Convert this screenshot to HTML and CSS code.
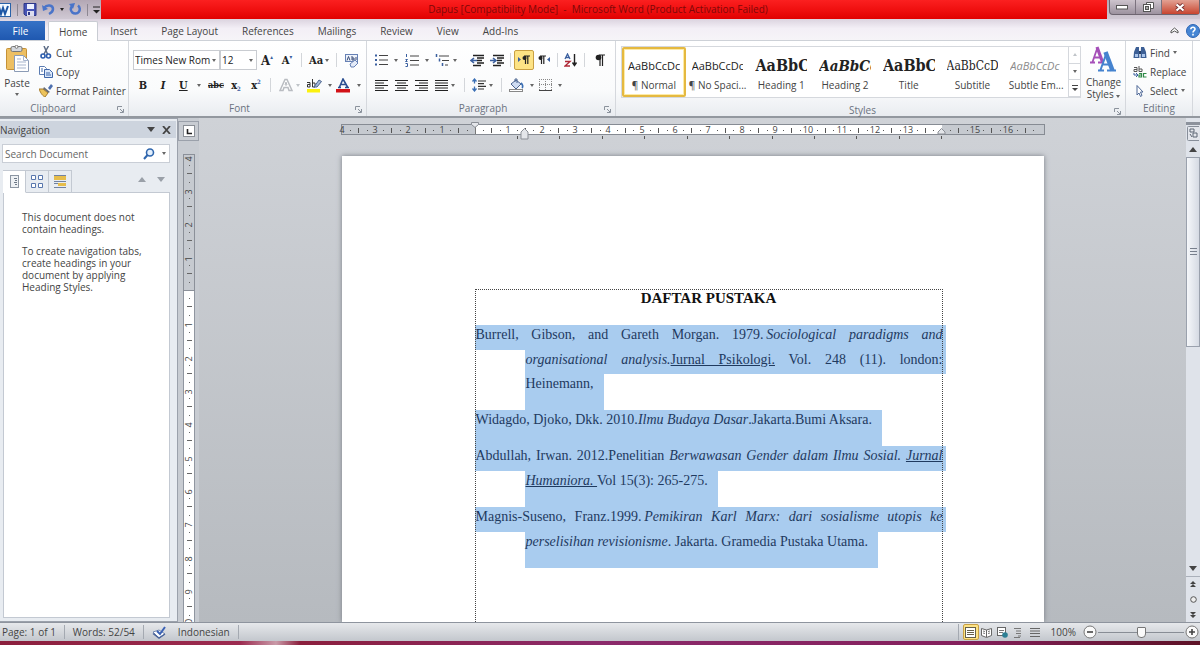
FILE: index.html
```html
<!DOCTYPE html>
<html lang="en">
  <head>
    <meta charset="UTF-8" />
    <meta name="viewport" content="width=device-width, initial-scale=1.0" />
    <title>Dapus [Compatibility Mode] - Microsoft Word</title>
    <link rel="stylesheet" href="styles.css">
  </head>

  <body>
    <!-- Title bar -->
    <header class="titlebar">
      <div class="quick">
        <svg width="12" height="14" viewBox="0 0 12 14"><rect x="-4" y=".5" width="14.500" height="13" fill="#f4f9ff" stroke="#2a62a8"/><path d="M-1 4l2 7 2-6 2 6 3-8" fill="none" stroke="#1c55a5" stroke-width="2"/></svg>
        <i class="bar"></i>
        <button aria-label="Save"><svg width="14" height="13" viewBox="0 0 14 13"><path d="M1 .5h12v12H2.500L1 11z" fill="#4754b4" stroke="#2e3788"/><rect x="4" y="1" width="7" height="5" fill="#eef1ff"/><rect x="4" y="8" width="7" height="5" fill="#dde"/><rect x="5" y="9" width="2" height="3" fill="#2e3788"/></svg></button>
        <button aria-label="Undo"><svg width="13" height="13" viewBox="0 0 13 13"><path d="M2 5C5 1 11 2 11 6c0 3-2 4-4 5" fill="none" stroke="#4a74c9" stroke-width="2.500"/><path d="M0 2l1 6 5-2z" fill="#4a74c9"/></svg></button>
        <i class="caret dark"></i>
        <button aria-label="Repeat"><svg width="13" height="13" viewBox="0 0 13 13"><path d="M9 2.500A4.500 4.500 0 1 1 3 3" fill="none" stroke="#4a74c9" stroke-width="2.500"/><path d="M6 0L0 1l4 5z" fill="#4a74c9"/></svg></button>
        <i class="bar"></i>
        <button aria-label="Customize"><svg width="7" height="8" viewBox="0 0 7 8"><path d="M0 1h7" stroke="#222"/><path d="M0 4h7L3.500 7.500z" fill="#222"/></svg></button>
      </div>
      <h1 class="title">Dapus [Compatibility Mode]&nbsp; -&nbsp; Microsoft Word (Product Activation Failed)</h1>
      <div class="window-controls">
        <button aria-label="Minimize"><svg width="12" height="5" viewBox="0 0 12 5"><rect x=".5" y=".5" width="11" height="3.500" fill="#fff" stroke="#555"/></svg></button>
        <button aria-label="Restore"><svg width="11" height="10" viewBox="0 0 11 10"><path d="M3.500.500h7v6h-7z" fill="#fff" stroke="#555"/><rect x=".5" y="2.500" width="7" height="7" fill="#fff" stroke="#555"/><rect x="2.500" y="4.500" width="3" height="3" fill="#aaa" stroke="#555"/></svg></button>
        <button class="close" aria-label="Close"><svg width="10" height="9" viewBox="0 0 10 9"><path d="M1.500 1.500l7 6m0-6l-7 6" stroke="#733" stroke-width="4"/><path d="M1.500 1.500l7 6m0-6l-7 6" stroke="#fff" stroke-width="2.200"/></svg></button>
      </div>
    </header>

    <!-- Ribbon tabs -->
    <nav class="tabs">
      <button class="file">File</button>
      <button class="active">Home</button>
      <button>Insert</button>
      <button>Page Layout</button>
      <button>References</button>
      <button>Mailings</button>
      <button>Review</button>
      <button>View</button>
      <button>Add-Ins</button>
      <span class="tabs-end">
        <button aria-label="Minimize the Ribbon"><svg width="9" height="7" viewBox="0 0 9 7"><path d="M1 4l3.500-3L8 4v2L4.500 4 1 6z" fill="#fff" stroke="#555"/></svg></button>
        <button aria-label="Help"><svg width="14" height="14" viewBox="0 0 14 14"><circle cx="7" cy="7" r="6.500" fill="#4685d4" stroke="#2e65b3"/><path d="M4.800 5.200C5 2.600 9.300 2.800 9 5.200 8.900 6.600 7 6.600 7 8.500M7 9.700v1.700" fill="none" stroke="#fff" stroke-width="1.600"/></svg></button>
      </span>
    </nav>

    <!-- Ribbon -->
    <div class="ribbon">
      <section class="group clipboard">
        <div class="group-body">
          <button class="big paste">
            <svg width="25" height="28" viewBox="0 0 25 28"><rect x="1.500" y="3.500" width="20" height="21" rx="1" fill="#edbf62" stroke="#c59136"/><rect x="6" y="1.500" width="11" height="5" rx="1.500" fill="#d3d7dd" stroke="#777"/><circle cx="11.500" cy="1.800" r="1.500" fill="#fff" stroke="#777"/><path d="M9.500 10.500h9l5 5v11h-14z" fill="#fff" stroke="#8b9bb5"/><path d="M18.500 10.500v5h5M12 14h4M12 17h9M12 20h9M12 23h9" fill="none" stroke="#a7b5cd"/></svg>
            <span>Paste</span><i class="caret"></i>
          </button>
          <div class="stack">
            <button><svg width="14" height="13" viewBox="0 0 14 13"><path d="M5 0l3.500 8M9.500 0L5 8" stroke="#5b6b85" stroke-width="1.500"/><circle cx="4" cy="10" r="2" fill="none" stroke="#2d5eae" stroke-width="1.600"/><circle cx="9.500" cy="10" r="2" fill="none" stroke="#2d5eae" stroke-width="1.600"/></svg>Cut</button>
            <button><svg width="14" height="12" viewBox="0 0 14 12"><path d="M.5.500h5l2 2v6h-7z" fill="#fff" stroke="#5b7cb2"/><path d="M5.500 3.500h5l3 3v5h-8z" fill="#dbe8fa" stroke="#3f66a8"/><path d="M2 3h2M2 5h2M7 7h4M7 9h5" stroke="#3f66a8"/></svg>Copy</button>
            <button><svg width="14" height="13" viewBox="0 0 14 13"><path d="M9 4l3-4 2 2-3 4z" fill="#4d6fae"/><path d="M5 3l6 5-2 1-5-4z" fill="#666c78"/><path d="M0 5l4 0 5 4-3 4c-2-1-4-3-6-8z" fill="#ecc35b" stroke="#a57b2b"/></svg>Format Painter</button>
          </div>
        </div>
        <footer>Clipboard<svg class="launcher" viewBox="0 0 7 7"><path d="M.5 4V.5H5M3 3l3 3M6.500 3v3.500H3" /></svg></footer>
      </section>

      <section class="group font">
        <div class="group-body rows">
          <div class="row">
            <label class="combo family"><select aria-label="Font"><option>Times New Rom</option></select><i class="caret"></i></label>
            <label class="combo size"><select aria-label="Font size"><option>12</option></select><i class="caret"></i></label>
            <button class="tool serif grow">A<sup>▴</sup></button>
            <button class="tool serif shrink">A<sup>▾</sup></button>
            <i class="sep"></i>
            <button class="tool case serif">Aa<i class="caret"></i></button>
            <i class="sep"></i>
            <button class="tool" aria-label="Clear formatting"><svg width="15" height="15" viewBox="0 0 15 15"><rect x="1.500" y="1.500" width="12" height="7" fill="#eef3fb" stroke="#6681b5"/><path d="M3 7.500l1.500-4L6 7.500M8 3v4h2V5H8M12 4v3" fill="none" stroke="#3a4d77"/><path d="M6 11l5-4 3 3-4 4H7z" fill="#e4ebf8" stroke="#6681b5"/></svg></button>
          </div>
          <div class="row">
            <button class="tool serif"><b>B</b></button>
            <button class="tool serif"><em>I</em></button>
            <button class="tool drop wide-drop serif"><u>U</u><i class="caret"></i></button>
            <button class="tool serif tiny"><s>abc</s></button>
            <button class="tool serif small">x<sub>2</sub></button>
            <button class="tool serif small">x<sup>2</sup></button>
            <i class="sep"></i>
            <button class="tool drop effects" aria-label="Text effects"><svg width="15" height="14" viewBox="0 0 15 14"><path d="M1 12.500L6 1.500h2l5 11h-3l-1-3H5l-1 3z" fill="#fff" stroke="#b9bcc1" stroke-width="1.500"/><path d="M6 7h2L7 4z" fill="#fff" stroke="#b9bcc1"/></svg><i class="caret pale"></i></button>
            <button class="tool drop" aria-label="Highlight"><svg width="16" height="15" viewBox="0 0 16 15"><rect x="1" y="11" width="13" height="3.500" fill="#fbf10f"/><path d="M1 4.500h3v4.500H1.500V6.500H4M6.500 1v8h2.500V5H6.500" fill="none" stroke="#333"/><path d="M8 9l5-7 2.500 1.500L11 9z" fill="#a6b9d8" stroke="#4b648f"/></svg><i class="caret"></i></button>
            <button class="tool drop" aria-label="Font color"><svg width="15" height="15" viewBox="0 0 15 15"><rect x="0" y="11" width="14" height="3.500" fill="#d21217"/><path d="M2 9.500h3M9 9.500h4M3.500 9L7 1l4.500 8M5 6.500h4.500" fill="none" stroke="#2c4f91" stroke-width="1.600"/></svg><i class="caret"></i></button>
          </div>
        </div>
        <footer>Font<svg class="launcher" viewBox="0 0 7 7"><path d="M.5 4V.5H5M3 3l3 3M6.500 3v3.500H3" /></svg></footer>
      </section>

      <section class="group paragraph">
        <div class="group-body rows">
          <div class="row">
            <button class="tool drop" aria-label="Bullets"><svg width="13" height="12" viewBox="0 0 13 12"><path d="M0 1.500h2M0 6h2M0 10.500h2" stroke="#3a5f9f" stroke-width="2"/><path d="M4 1.500h9M4 6h9M4 10.500h9" stroke="#444"/></svg><i class="caret"></i></button>
            <button class="tool drop" aria-label="Numbering"><svg width="14" height="13" viewBox="0 0 14 13"><path d="M1.500 0v3M.5 5.500h2L.5 7.500h2M.5 9.500h2v3h-2" fill="none" stroke="#3a5f9f"/><path d="M5 2h9M5 6.500h9M5 11h9" stroke="#444"/></svg><i class="caret"></i></button>
            <button class="tool drop tight multilevel" aria-label="Multilevel list"><svg width="15" height="13" viewBox="0 0 15 13"><path d="M1.500 0v3M4.500 4.500v3M7.500 9v3" stroke="#3a5f9f" stroke-width="1.500"/><path d="M4 2h10M7 6.500h7M10 11h3" stroke="#444"/></svg><i class="caret"></i></button>
            <button class="tool" aria-label="Decrease indent"><svg width="14" height="13" viewBox="0 0 14 13"><path d="M3 1.500h11M7 4h7M7 6.500h5M7 9h7M3 11.500h8" stroke="#222" stroke-width="1.400"/><path d="M7 6.500H2M4 4L1 6.500 4 9" fill="none" stroke="#3a5f9f" stroke-width="1.600"/></svg></button>
            <button class="tool" aria-label="Increase indent"><svg width="14" height="13" viewBox="0 0 14 13"><path d="M3 1.500h11M7 4h7M7 6.500h5M7 9h7M3 11.500h8" stroke="#222" stroke-width="1.400"/><path d="M0 6.500h5M3 4l3 2.500L3 9" fill="none" stroke="#3a5f9f" stroke-width="1.600"/></svg></button>
            <i class="sep"></i>
            <button class="tool chosen" aria-label="Left to right"><svg width="12" height="10" viewBox="0 0 12 10"><path d="M0 2v5l3-2.500z" fill="#3a5f9f"/><path d="M7.500 1.500V9M9.800 1.500V9M6 1h6" stroke="#222" stroke-width="1.200"/><circle cx="6.500" cy="3" r="2" fill="#222"/></svg></button>
            <button class="tool" aria-label="Right to left"><svg width="12" height="10" viewBox="0 0 12 10"><path d="M12 2v5L9 4.500z" fill="#3a5f9f"/><path d="M3.500 1.500V9M5.800 1.500V9M2 1h6" stroke="#222" stroke-width="1.200"/><circle cx="2.500" cy="3" r="2" fill="#222"/></svg></button>
            <i class="sep"></i>
            <button class="tool" aria-label="Sort"><svg width="14" height="14" viewBox="0 0 14 14"><path d="M1 6l2.500-5L6 6M2 4.500h3" fill="none" stroke="#3a5f9f" stroke-width="1.300"/><path d="M1 8.500h5L1 13h5" fill="none" stroke="#b02a38" stroke-width="1.400"/><path d="M10.500 1v11M8.500 9.500l2 3 2-3" fill="none" stroke="#222" stroke-width="1.400"/></svg></button>
            <i class="sep"></i>
            <button class="tool marks-button" aria-label="Show marks"><svg width="10" height="12" viewBox="0 0 10 12"><path d="M5 1v11M7.500 1v11M4 1h6" stroke="#222" stroke-width="1.200"/><circle cx="3.500" cy="3.500" r="2.800" fill="#222"/></svg></button>
          </div>
          <div class="row">
            <button class="tool" aria-label="Align left"><svg class="lines" viewBox="0 0 13 11"><path d="M0 .5h13M0 3h9M0 5.500h13M0 8h9M0 10.500h13"/></svg></button>
            <button class="tool" aria-label="Center"><svg class="lines" viewBox="0 0 13 11"><path d="M0 .5h13M2 3h9M0 5.500h13M2 8h9M0 10.500h13"/></svg></button>
            <button class="tool" aria-label="Align right"><svg class="lines" viewBox="0 0 13 11"><path d="M0 .5h13M4 3h9M0 5.500h13M4 8h9M0 10.500h13"/></svg></button>
            <button class="tool drop tight" aria-label="Justify"><svg class="lines" viewBox="0 0 13 11"><path d="M0 .5h13M0 3h13M0 5.500h13M0 8h13M0 10.500h13"/></svg><i class="caret"></i></button>
            <i class="sep"></i>
            <button class="tool drop tight" aria-label="Line spacing"><svg width="14" height="14" viewBox="0 0 14 14"><path d="M2.500 1v4.500M2.500 8.500V13M.5 3.500l2-2.500 2 2.500M.5 10.500l2 2.500 2-2.500" fill="none" stroke="#3a6fb5" stroke-width="1.300"/><path d="M6 3h8M6 5.700h6M6 8.400h8M6 11h6" stroke="#333" stroke-width="1.200"/></svg><i class="caret"></i></button>
            <i class="sep"></i>
            <button class="tool drop" aria-label="Shading"><svg width="15" height="14" viewBox="0 0 15 14"><path d="M2 6l5-4 5 4-5 5z" fill="#cfdcf2" stroke="#4b648f"/><path d="M6 4V1h2v4" fill="none" stroke="#4b648f"/><path d="M12 5c2 2 2 4 1 5" fill="none" stroke="#3a6fb5" stroke-width="1.800"/><rect x=".5" y="11.500" width="13" height="2" fill="#fff" stroke="#888"/></svg><i class="caret"></i></button>
            <button class="tool drop" aria-label="Borders"><svg width="13" height="12" viewBox="0 0 13 12"><path d="M.5 0v11M12.500 0v11M6.500 0v11M0 .5h13M0 5.500h13" stroke="#888" stroke-dasharray="1 1"/><path d="M0 11.500h13" stroke="#444"/></svg><i class="caret"></i></button>
          </div>
        </div>
        <footer>Paragraph<svg class="launcher" viewBox="0 0 7 7"><path d="M.5 4V.5H5M3 3l3 3M6.500 3v3.500H3" /></svg></footer>
      </section>

      <section class="group styles">
        <div class="group-body">
          <div class="gallery">
            <button class="style picked"><span class="preview">AaBbCcDc</span><span>¶ Normal</span></button>
            <button class="style"><span class="preview">AaBbCcDc</span><span>¶ No Spaci...</span></button>
            <button class="style"><span class="preview heading">AaBbC</span><span>Heading 1</span></button>
            <button class="style"><span class="preview heading slanted">AaBbCc</span><span>Heading 2</span></button>
            <button class="style"><span class="preview heading">AaBbC</span><span>Title</span></button>
            <button class="style"><span class="preview subtitle">AaBbCcD</span><span>Subtitle</span></button>
            <button class="style"><span class="preview subtle">AaBbCcDc</span><span>Subtle Em...</span></button>
            <div class="gallery-scroll">
              <button aria-label="Previous row"><i class="caret up pale"></i></button>
              <button aria-label="Next row"><i class="caret"></i></button>
              <button aria-label="More styles"><svg width="6" height="6" viewBox="0 0 6 6"><path d="M0 .5h6" stroke="#444"/><path d="M0 3h6L3 6z" fill="#444"/></svg></button>
            </div>
          </div>
          <button class="big change">
            <svg width="27" height="26" viewBox="0 0 27 26"><path d="M0 16.500h5M8 16.500h6M2.500 16L7.500 1.500M4.500 11.500H11" fill="none" stroke="#a54fb8" stroke-width="1.800"/><path d="M7 1l5.500 15" stroke="#a54fb8" stroke-width="3.200"/><path d="M8 24.500h6M17 24.500h9M10.500 24L16.500 7M12.500 18.500h9" fill="none" stroke="#4583cf" stroke-width="2"/><path d="M15.500 6L22.500 24.500" stroke="#4583cf" stroke-width="4.500"/></svg>
            <span>Change<br>Styles <i class="caret"></i></span>
          </button>
        </div>
        <footer>Styles<svg class="launcher" viewBox="0 0 7 7"><path d="M.5 4V.5H5M3 3l3 3M6.500 3v3.500H3" /></svg></footer>
      </section>

      <section class="group editing">
        <div class="group-body">
          <div class="stack">
            <button><svg width="14" height="12" viewBox="0 0 14 12"><path d="M3 0h3v3l.5 8H.5L1 5zM8 0h3l2 5 .5 6h-6z" fill="#3c5f95"/><path d="M6 4h2v3H6z" fill="#263f68"/><path d="M2 7h3v3H2zM9 7h3v3H9z" fill="#a9c4ea"/></svg>Find <i class="caret"></i></button>
            <button><svg width="14" height="12" viewBox="0 0 14 12"><path d="M1 1.500h3v4H1v-2h3M6 0v5.500h3V3H6" fill="none" stroke="#555"/><path d="M6 7.500h2.500v3.500H6V9h2M13.500 7.500h-3v3.500h3" fill="none" stroke="#2f8a48" stroke-width="1.200"/><path d="M1 7v2h3M3 7l2 2-2 2" fill="none" stroke="#3a5f9f"/></svg>Replace</button>
            <button><svg width="14" height="12" viewBox="0 0 14 12"><path d="M4 .5v9.500l2-2 1.500 3.500 1.500-1L7.500 7H10z" fill="#fff" stroke="#4d6796"/></svg>Select <i class="caret"></i></button>
          </div>
        </div>
        <footer>Editing</footer>
      </section>
    </div>

    <!-- Workspace -->
    <main class="workspace">
      <aside class="nav-pane">
        <div class="pane-title"><h2>Navigation</h2><i class="caret wide"></i>
          <button aria-label="Close pane"><svg width="9" height="8" viewBox="0 0 9 8"><path d="M1 0l7 8M8 0L1 8" stroke="#444" stroke-width="1.800"/></svg></button>
        </div>
        <div class="search">
          <input type="text" aria-label="Search Document" placeholder="Search Document">
          <svg width="12" height="12" viewBox="0 0 12 12"><circle cx="7" cy="4.500" r="3.500" fill="#e4f0fd" stroke="#2f66ad" stroke-width="1.600"/><path d="M4.500 7L1 11" stroke="#2f66ad" stroke-width="2"/></svg>
          <i class="caret"></i>
        </div>
        <div class="pane-tabs">
          <button class="active" aria-label="Headings"><svg width="9" height="13" viewBox="0 0 9 13"><rect x=".5" y=".5" width="8" height="12" fill="#eef1f4" stroke="#8c96a3"/><path d="M4 3.500h3M5 5.500h2M4 7.500h3M5 9.500h2" stroke="#6d7886"/></svg></button>
          <button aria-label="Pages"><svg width="12" height="13" viewBox="0 0 12 13"><path d="M.5.500h4v4h-4zM7.500.500h4v4h-4zM.5 8.500h4v4h-4zM7.500 8.500h4v4h-4z" fill="#fff" stroke="#5876ad"/></svg></button>
          <button aria-label="Results"><svg width="12" height="13" viewBox="0 0 12 13"><rect width="12" height="5" fill="#e6bd4b"/><path d="M0 .5h12M0 6.500h12M0 8.500h12M0 12.500h12" stroke="#7282a0"/><rect x="4" y="8" width="8" height="3" fill="#e6bd4b"/></svg></button>
          <span class="pane-steps"><i class="caret wide up grey"></i><i class="caret wide grey"></i></span>
        </div>
        <div class="pane-body">
          <p>This document does not contain headings.</p>
          <p>To create navigation tabs, create headings in your document by applying Heading Styles.</p>
        </div>
      </aside>

      <div class="side-ruler">
        <button class="tab-stop" aria-label="Left tab"><svg width="12" height="12" viewBox="0 0 12 12"><rect x=".5" y=".5" width="11" height="11" fill="#fff" stroke="#8a8f96"/><path d="M4.500 4v4.500H9" fill="none" stroke="#222" stroke-width="1.600"/></svg></button>
        <svg class="v-scale" width="12" height="500" viewBox="0 0 12 500">
          <rect x=".5" y=".5" width="11" height="510" fill="#fff" stroke="#9096a0"/>
          <rect x=".5" y=".5" width="11" height="136" fill="#c6cad0" stroke="#8b9099"/>
          <g stroke="#666" shape-rendering="crispEdges">
            <path d="M6 11v489" stroke-dasharray="1 15.667 1 15.663"/>
            <path d="M6 19v489" stroke-width="5" stroke-dasharray="1 32.330"/>
          </g>
          <g class="marks">
            <text transform="translate(9 5) rotate(-90)">4</text>
            <text transform="translate(9 38) rotate(-90)">3</text>
            <text transform="translate(9 71) rotate(-90)">2</text>
            <text transform="translate(9 105) rotate(-90)">1</text>
            <text transform="translate(9 171) rotate(-90)">1</text>
            <text transform="translate(9 205) rotate(-90)">2</text>
            <text transform="translate(9 238) rotate(-90)">3</text>
            <text transform="translate(9 271) rotate(-90)">4</text>
            <text transform="translate(9 305) rotate(-90)">5</text>
            <text transform="translate(9 338) rotate(-90)">6</text>
            <text transform="translate(9 371) rotate(-90)">7</text>
            <text transform="translate(9 405) rotate(-90)">8</text>
            <text transform="translate(9 438) rotate(-90)">9</text>
            <text transform="translate(9 470) rotate(-90)">10</text>
          </g>
        </svg>
      </div>

      <div class="canvas">
        <svg class="h-scale" width="704" height="20" viewBox="0 0 704 20">
          <rect x=".5" y="2.500" width="703" height="10" fill="#c6cad0" stroke="#868b93"/>
          <rect x="134" y="3" width="467" height="9" fill="#fff"/>
          <g stroke="#555" shape-rendering="crispEdges">
            <path d="M9 8h692" stroke-dasharray="1 15.667 1 15.663"/>
            <path d="M17 8h680" stroke-width="5" stroke-dasharray="1 32.330"/>
          </g>
          <g class="marks">
            <text x="1" y="11">4</text><text x="34" y="11">3</text><text x="67" y="11">2</text><text x="101" y="11">1</text>
            <text x="167" y="11">1</text><text x="201" y="11">2</text><text x="234" y="11">3</text><text x="267" y="11">4</text>
            <text x="301" y="11">5</text><text x="334" y="11">6</text><text x="367" y="11">7</text><text x="401" y="11">8</text>
            <text x="434" y="11">9</text><text x="467" y="11">10</text><text x="501" y="11">11</text><text x="534" y="11">12</text>
            <text x="567" y="11">13</text><text x="634" y="11">15</text><text x="667" y="11">16</text>
          </g>
          <path d="M134.500 3v9" stroke="#777"/>
          <path d="M176.500 14v3M218.500 14v3M261.500 14v3M303.500 14v3M346.500 14v3M388.500 14v3M431.500 14v3M473.500 14v3M515.500 14v3M558.500 14v3M600.500 14v3" stroke="#555"/>
          <g fill="#e4e6ea" stroke="#8b8f96">
            <path d="M130.500.500h7v2l-3.500 3-3.500-3z"/>
            <path d="M183.500 6.500l3.500 3.500v7h-7v-7z"/>
            <path d="M600.500 6.500l3.500 3.500v2h-7v-2z"/>
          </g>
        </svg>
        <article class="sheet">
          <div class="text-area">
            <h3>DAFTAR PUSTAKA</h3>
            <div class="entry">
              <p class="first full">Burrell, Gibson, and Gareth Morgan. 1979.&thinsp;<em>Sociological paradigms and</em></p>
              <p class="full"><em>organisational analysis.</em><u>Jurnal Psikologi.</u> Vol. 248 (11). london:</p>
              <p class="last">Heinemann,</p>
            </div>
            <div class="entry">
              <p class="first last">Widagdo, Djoko, Dkk. 2010.<em>Ilmu Budaya Dasar</em>.Jakarta.Bumi Aksara.</p>
            </div>
            <div class="entry">
              <p class="first full">Abdullah, Irwan. 2012.Penelitian <em>Berwawasan Gender dalam Ilmu Sosial. <u>Jurnal</u></em></p>
              <p class="last"><em><u>Humaniora. </u></em>Vol 15(3): 265-275.</p>
            </div>
            <div class="entry">
              <p class="first full">Magnis-Suseno, Franz.1999.&thinsp;<em>Pemikiran Karl Marx: dari sosialisme utopis ke</em></p>
              <p class="last"><em>perselisihan revisionisme</em>. Jakarta. Gramedia Pustaka Utama.</p>
            </div>
          </div>
        </article>
      </div>

      <div class="scrollbar">
        <button class="splitter" aria-label="Split"></button>
        <button class="ruler-toggle" aria-label="View ruler"><svg width="12" height="15" viewBox="0 0 12 15"><rect x=".5" y=".5" width="13" height="14" rx="1" fill="#e3e6ec" stroke="#878e99"/><path d="M3 3h4v3H3zM6 7h4v4H6zM3 8l2 3" fill="none" stroke="#5d6674"/></svg></button>
        <button aria-label="Scroll up"><i class="caret wide up"></i></button>
        <div class="track"><div class="thumb"><svg width="7" height="7" viewBox="0 0 7 7"><path d="M0 .5h7M0 3.500h7M0 6.500h7" stroke="#777f8c"/></svg></div></div>
        <button aria-label="Scroll down"><i class="caret wide"></i></button>
        <div class="browse">
          <button aria-label="Previous page"><svg width="6" height="7" viewBox="0 0 6 7"><path d="M0 3l3-3 3 3zM0 6l3-3 3 3z" fill="#444"/></svg></button>
          <button aria-label="Browse object"><svg width="7" height="7" viewBox="0 0 7 7"><circle cx="3.500" cy="3.500" r="2.800" fill="#eee" stroke="#555"/></svg></button>
          <button aria-label="Next page"><svg width="6" height="7" viewBox="0 0 6 7"><path d="M0 1h6L3 4zM0 4h6L3 7z" fill="#444"/></svg></button>
        </div>
      </div>
    </main>

    <!-- Status bar -->
    <footer class="statusbar">
      <button>Page: 1 of 1</button>
      <button>Words: 52/54</button>
      <button aria-label="Proofing"><svg width="15" height="13" viewBox="0 0 15 13"><path d="M1 6l6-2 6 4-6 4z" fill="#fff" stroke="#7489b0"/><path d="M1 7.500l6 4.500 6-4" fill="none" stroke="#4b659a" stroke-width="1.500"/><path d="M5 5l3 3 5-7" fill="none" stroke="#3b62b5" stroke-width="2"/></svg></button>
      <button class="language">Indonesian</button>
      <div class="views">
        <button class="chosen" aria-label="Print layout"><svg width="11" height="11" viewBox="0 0 11 11"><rect x=".5" y=".5" width="10" height="10" fill="#fff" stroke="#66604a"/><path d="M2 3.500h7M2 5.500h7M2 7.500h7" stroke="#66604a"/></svg></button>
        <button aria-label="Full screen reading"><svg width="11" height="11" viewBox="0 0 11 11"><path d="M.5 1.500l5 1.500 5-1.500v7l-5 2-5-2zM5.500 3v7" fill="#fff" stroke="#666"/><path d="M2 4l2 .5M2 6l2 .5M7 4.500L9 4M7 6.500L9 6" stroke="#777"/></svg></button>
        <button aria-label="Web layout"><svg width="11" height="11" viewBox="0 0 11 11"><rect x=".5" y=".5" width="8" height="8" fill="#fff" stroke="#666"/><path d="M2 3.500h5M2 5.500h4" stroke="#777"/><circle cx="8" cy="8" r="2.800" fill="#2d7f93"/></svg></button>
        <button aria-label="Outline"><svg width="11" height="11" viewBox="0 0 11 11"><path d="M1 1.500h7M3 4h5M3 6.500h5M5 9h3M1 10.500h6" stroke="#777"/></svg></button>
        <button aria-label="Draft"><svg width="10" height="11" viewBox="0 0 10 11"><path d="M0 1.500h10M0 4h10M0 6.500h10M0 9.500h10" stroke="#666"/></svg></button>
      </div>
      <button class="percent">100%</button>
      <button class="round" aria-label="Zoom out"><svg width="14" height="14" viewBox="0 0 14 14"><circle cx="7" cy="7" r="6" fill="#fafafa" stroke="#777"/><path d="M4 7h6" stroke="#444" stroke-width="1.600"/></svg></button>
      <input class="zoom" type="range" min="0" max="100" value="50" aria-label="Zoom">
      <button class="round" aria-label="Zoom in"><svg width="14" height="14" viewBox="0 0 14 14"><circle cx="7" cy="7" r="6" fill="#fafafa" stroke="#777"/><path d="M4 7h6M7 4v6" stroke="#444" stroke-width="1.600"/></svg></button>
    </footer>
    <div class="taskbar"></div>
  </body>
</html>
```
FILE: styles.css
```css
* {
  margin: 0;
  padding: 0;
  box-sizing: border-box;
}

body {
  display: flex;
  flex-direction: column;
  height: 100vh;
  overflow: hidden;
  background-color: #c8ccd2;
  color: #444;
  font-family: "Open Sans", "Noto Sans", sans-serif;
  font-size: 10px;
}

button,
input,
select {
  border: none;
  background: none;
  color: inherit;
  font: inherit;
}

button {
  display: flex;
  align-items: center;
  justify-content: center;
  white-space: nowrap;
}

svg {
  flex: none;
}

.caret {
  display: inline-block;
  flex: none;
  border: 2px solid transparent;
  border-top: 3px solid #666;
  border-bottom: none;
}

.caret.dark {
  border-top-color: #222;
}

.caret.pale {
  border-top-color: #c0c4c9;
}

.caret.wide {
  border-width: 5px 4px 0;
  border-top-color: #444;
}

.caret.grey {
  border-top-color: #9aa0a8;
}

.caret.up {
  rotate: 180deg;
}

/* Title bar */
.titlebar {
  display: flex;
  height: 19px;
  flex: none;
  background: linear-gradient(#b3a7b4, #d0c9d4);
}

.quick {
  display: flex;
  align-items: center;
  gap: 5px;
  width: 101px;
}

.bar {
  width: 1px;
  height: 12px;
  background-color: #8d8792;
}

.title {
  flex: 1;
  padding-right: 12px;
  background: linear-gradient(#fb2020, #f01010 50%, #e00000);
  color: #7d0808;
  font-size: 10px;
  font-weight: normal;
  line-height: 19px;
  text-align: center;
}

.window-controls {
  display: flex;
  width: 91px;
  height: 15px;
  margin-left: 2px;
  border: 1px solid #6d6570;
  border-top: none;
  border-radius: 0 0 4px 4px;
  background: linear-gradient(#cdc4cd, #9c929f);
}

.window-controls button {
  flex: 2;
  border-right: 1px solid #7b727e;
}

.window-controls .close {
  flex: 3;
  border: none;
  background: linear-gradient(#e2a193, #c8452f);
}

/* Tabs */
.tabs {
  display: flex;
  height: 22px;
  flex: none;
  padding-top: 2px;
  border-bottom: 1px solid #cdd1d7;
  background: linear-gradient(#dbd3df, #f3eff6 45%, #f6f4f8);
}

.tabs button {
  padding: 0 12px;
}

.tabs .file {
  width: 45px;
  margin-right: 3px;
  padding: 0 4px 0 0;
  background: linear-gradient(#3672c6, #1f58b0);
  color: #fff;
}

.tabs .active {
  height: 20px;
  padding: 0 10px;
  border: 1px solid #c9ccd3;
  border-bottom: none;
  border-radius: 2px 2px 0 0;
  background-color: #fff;
}

.tabs-end {
  display: flex;
  gap: 7px;
  margin-left: auto;
}

.tabs-end button {
  padding: 0;
}

/* Ribbon */
.ribbon {
  display: flex;
  flex: none;
  height: 77px;
  padding-right: 7px;
  border-bottom: 2px solid #93989f;
  background: linear-gradient(#fff, #fafbfc 65%, #e9ecf0);
}

.group {
  display: flex;
  flex: none;
  flex-direction: column;
  border-right: 1px solid #d5d8dd;
}

.group-body {
  display: flex;
  flex: 1;
}

.group footer {
  position: relative;
  height: 15px;
  line-height: 15px;
  color: #6b7280;
  text-align: center;
}

.launcher {
  position: absolute;
  right: 4px;
  bottom: 3px;
  width: 7px;
  height: 7px;
  fill: none;
  stroke: #8b929c;
}

.clipboard {
  width: 129px;
}

.clipboard footer {
  padding-right: 22px;
}

.font {
  width: 238px;
}

.font footer,
.paragraph footer,
.styles footer {
  padding-right: 16px;
}

.paragraph {
  width: 249px;
}

.styles {
  flex: 1;
  min-width: 0;
}

.editing {
  width: 67px;
}

.big {
  flex: none;
  flex-direction: column;
  justify-content: flex-start;
  line-height: 12px;
}

.paste {
  width: 34px;
  padding-top: 4px;
  gap: 4px;
}

.stack {
  display: flex;
  flex-direction: column;
  padding: 2px 0 0 5px;
}

.editing .stack {
  padding-left: 7px;
}

.stack button {
  justify-content: flex-start;
  gap: 3px;
  height: 19px;
}

.rows {
  flex-direction: column;
  gap: 5px;
  padding: 9px 0 0 4px;
}

.row {
  display: flex;
  align-items: center;
  height: 20px;
}

.combo {
  display: flex;
  align-items: center;
  height: 20px;
  padding-right: 3px;
  border: 1px solid #c9ccd1;
  background-color: #fff;
}

.combo select {
  flex: 1;
  min-width: 0;
  padding-left: 1px;
  appearance: none;
  color: #222;
}

.family {
  width: 87px;
}

.size {
  width: 37px;
}

.tool {
  flex: none;
  width: 20px;
  height: 20px;
}

.drop {
  justify-content: flex-start;
  gap: 6px;
  width: 30px;
  padding-left: 4px;
}

.tight {
  gap: 3px;
}

.wide-drop {
  gap: 9px;
  width: 33px;
  padding-left: 6px;
}

.multilevel {
  width: 36px;
}

.marks-button {
  width: 24px;
}

.effects {
  gap: 2px;
  width: 27px;
}

.case {
  gap: 2px;
  width: 26px;
}

.sep {
  width: 1px;
  height: 14px;
  margin: 0 4px;
  background-color: #d3d6da;
}

.paragraph .sep {
  margin: 0 3px;
}

.serif {
  color: #222;
  font-family: "DejaVu Serif Condensed", "DejaVu Serif", serif;
  font-size: 11px;
  font-weight: bold;
}

.serif sup,
.serif sub {
  padding-bottom: 7px;
  color: #3a5f9f;
  font-size: 6px;
  line-height: 8px;
}

.serif sub {
  padding: 7px 0 0;
}

.grow {
  font-size: 13px;
}

.tiny {
  font-size: 9px;
}

.small {
  font-size: 11px;
}

.chosen {
  border: 1px solid #c9a043;
  border-radius: 2px;
  background-color: #fde385;
}

.lines {
  width: 13px;
  height: 11px;
  fill: none;
  stroke: #222;
}

/* Styles gallery */
.styles .group-body {
  padding: 5px 1px 3px 5px;
}

.gallery {
  display: flex;
  flex: 1;
  min-width: 0;
  height: 52px;
  border: 1px solid #d5d8dd;
  background-color: #fff;
}

.style {
  flex: 1;
  flex-direction: column;
  justify-content: flex-end;
  min-width: 0;
  padding: 0 4px 3px;
  border: 2px solid transparent;
}

.picked {
  border-color: #e5b940;
  border-radius: 2px;
  box-shadow: inset 0 0 0 1px #fdeba8;
}

.preview {
  width: 100%;
  overflow: hidden;
  color: #222;
  font-size: 11px;
  line-height: 24px;
  text-align: left;
}

.heading {
  font-family: "DejaVu Serif Condensed", "DejaVu Serif", serif;
  font-size: 16px;
  font-weight: bold;
}

.slanted {
  font-size: 15px;
  font-style: italic;
}

.subtitle {
  font-family: "DejaVu Serif Condensed", "DejaVu Serif", serif;
  font-size: 12px;
}

.subtle {
  color: #8a8a8a;
  font-style: italic;
}

.gallery-scroll {
  display: flex;
  flex-direction: column;
  width: 12px;
}

.gallery-scroll button {
  flex: 1;
  border-left: 1px solid #d5d8dd;
  border-bottom: 1px solid #d5d8dd;
}

.change {
  width: 41px;
  margin-left: 2px;
}

.change svg {
  margin-bottom: 4px;
}

/* Workspace */
.workspace {
  display: flex;
  flex: 1;
  min-height: 0;
  overflow: hidden;
  background: linear-gradient(#cfd2d7, #b6babf);
}

.nav-pane {
  display: flex;
  flex-direction: column;
  width: 178px;
  padding: 2px 7px 3px 0;
  border: 1px solid #9ba1ab;
  border-left: none;
  background-color: #e8ecf1;
}

.pane-title {
  display: flex;
  align-items: center;
  gap: 7px;
  height: 17px;
  margin-right: -6px;
  padding-right: 5px;
  background-color: #cdd4de;
}

.pane-title h2 {
  flex: 1;
  font-size: 10px;
  font-weight: normal;
}

.search {
  display: flex;
  align-items: center;
  gap: 7px;
  height: 19px;
  margin: 6px 0 7px 2px;
  padding-right: 3px;
  border: 1px solid #c9ced6;
  background-color: #fff;
}

.search input {
  flex: 1;
  min-width: 0;
  padding-left: 2px;
}

.search input::placeholder {
  color: #666;
}

.pane-tabs {
  display: flex;
  height: 23px;
  margin-left: 3px;
}

.pane-tabs button {
  width: 23px;
  border: 1px solid #c3c9d2;
  border-left: none;
}

.pane-tabs .active {
  background-color: #fff;
  border-bottom-color: #fff;
}

.pane-steps {
  display: flex;
  flex: 1;
  gap: 11px;
  align-items: flex-start;
  justify-content: flex-end;
  padding: 7px 5px 0 0;
  border-bottom: 1px solid #c3c9d2;
}

.pane-body {
  flex: 1;
  margin-left: 3px;
  padding: 18px 24px 0 18px;
  border: 1px solid #c3c9d2;
  border-top: none;
  background-color: #fff;
  line-height: 12px;
}

.pane-body p {
  margin-bottom: 10px;
}

.side-ruler {
  display: flex;
  flex-direction: column;
  align-items: center;
  width: 21px;
  background-color: #c8ccd2;
}

.tab-stop {
  flex: none;
  width: 21px;
  height: 20px;
  margin: 3px 0 13px;
  border: 1px solid #9ba1ab;
}

.v-scale {
  overflow: visible;
}

.marks {
  fill: #444;
  font-size: 9px;
  text-anchor: middle;
}

.canvas {
  display: flex;
  flex: 1;
  flex-direction: column;
  align-items: center;
  min-width: 0;
}

.h-scale {
  margin: 4px 0 14px;
  overflow: visible;
}

.sheet {
  flex: 1;
  width: 702px;
  padding: 133px 101px 0 133px;
  background-color: #fff;
  box-shadow: 0 0 5px #777c84;
}

.text-area {
  position: relative;
  height: 100%;
  color: #1f3a5f;
  font-family: "Liberation Serif", "Times New Roman", serif;
  font-size: 14px;
  line-height: 18px;
}

/* Dotted text boundary drawn over the selection */
.text-area::after {
  content: "";
  position: absolute;
  inset: 0;
  border: 1px dotted #444;
  border-bottom: none;
  pointer-events: none;
}

.text-area h3 {
  padding-bottom: 18px;
  color: #111;
  font-size: 15px;
  text-align: center;
}

.entry p {
  width: fit-content;
  margin-left: 50px;
  padding: 1px 3px 5px 1px;
  background-color: #a9ccef;
  white-space: nowrap;
}

.entry .first {
  margin-left: 0;
}

.entry .full {
  width: auto;
  margin-right: -3px;
  text-align: justify;
  text-align-last: justify;
  white-space: normal;
}

.entry .first.full {
  padding-bottom: 6px;
}

.entry .last {
  padding-right: 10px;
  padding-bottom: 17px;
}

/* Scrollbar */
.scrollbar {
  display: flex;
  flex-direction: column;
  width: 14px;
  padding-top: 4px;
  background-color: #dfe3ea;
}

.scrollbar button {
  flex: none;
  width: 100%;
  height: 15px;
}

.scrollbar .splitter {
  height: 3px;
  background-color: #8c929c;
}

.scrollbar .ruler-toggle {
  height: 17px;
}

.track {
  flex: 1;
}

.thumb {
  display: flex;
  align-items: center;
  justify-content: center;
  height: 47%;
  border: 1px solid #9aa1ad;
  background: linear-gradient(90deg, #f5f7fa, #d5dae3);
}

.browse {
  border-top: 1px solid #aab0ba;
}

/* Status bar */
.statusbar {
  display: flex;
  align-items: center;
  flex: none;
  height: 19px;
  border-top: 1px solid #8e949e;
  background: linear-gradient(#e6e8eb, #c3c7cd);
}

.statusbar > button {
  height: 14px;
  padding: 0 8px;
  border-right: 1px solid #a4a9b1;
}

.statusbar > button:first-child {
  padding-left: 2px;
}

.statusbar > button:nth-child(3) {
  border: none;
}

.statusbar .language {
  padding-left: 3px;
}

.views {
  display: flex;
  margin-left: auto;
  padding-left: 4px;
  border-left: 1px solid #a4a9b1;
}

.views button {
  width: 16px;
  height: 16px;
}

.statusbar .percent {
  padding: 0 6px 0 8px;
  border: none;
}

.statusbar .round {
  width: 16px;
  padding: 0;
  border: none;
}

.zoom {
  width: 86px;
  height: 14px;
  appearance: none;
}

.zoom::-webkit-slider-runnable-track {
  height: 1px;
  background-color: #888d95;
}

.zoom::-webkit-slider-thumb {
  width: 9px;
  height: 11px;
  margin-top: -5px;
  border: 1px solid #777;
  border-radius: 1px 1px 4px 4px;
  background-color: #fafafa;
  appearance: none;
}

.taskbar {
  flex: none;
  height: 4px;
  background: linear-gradient(90deg, #8b1f3d, #9c2b50 20%, #c99aa8 23%, #8b1f3d 25%, #8b2a6b 50%, #84205c 80%, #5d1226);
}
```
